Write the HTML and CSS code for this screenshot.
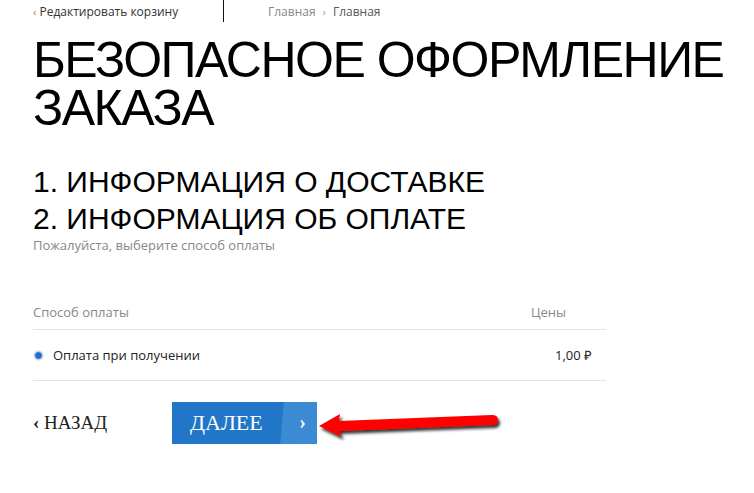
FILE: index.html
```html
<!DOCTYPE html>
<html lang="ru">
<head>
<meta charset="utf-8">
<link rel="stylesheet" href="styles.css">
</head>
<body>
<div class="page">
  <div class="topbar">
    <a class="back-link"><span class="lt">‹</span> Редактировать корзину</a>
    <span class="divider"></span>
    <div class="crumbs"><span class="c1">Главная</span><span class="sep">›</span><span class="c2">Главная</span></div>
  </div>
  <h1 class="title">БЕЗОПАСНОЕ ОФОРМЛЕНИЕ ЗАКАЗА</h1>
  <h2 class="step">1. ИНФОРМАЦИЯ О ДОСТАВКЕ</h2>
  <h2 class="step">2. ИНФОРМАЦИЯ ОБ ОПЛАТЕ</h2>
  <p class="hint">Пожалуйста, выберите способ оплаты</p>
  <div class="table">
    <div class="thead"><span>Способ оплаты</span><span class="price-h">Цены</span></div>
    <div class="trow"><span class="radio"></span><span class="name">Оплата при получении</span><span class="price">1,00 ₽</span></div>
  </div>
  <div class="actions">
    <a class="prev"><span class="chev">‹</span> НАЗАД</a>
    <div class="next-wrap">
      <a class="next"><span class="next-label">ДАЛЕЕ</span><span class="next-arrow">›</span></a>
      <svg class="red-arrow" width="190" height="40" viewBox="0 0 190 40">
        <defs>
          <filter id="sh" x="-10%" y="-30%" width="130%" height="180%">
            <feGaussianBlur in="SourceAlpha" stdDeviation="1.5"/>
            <feOffset dx="2" dy="3" result="b"/>
            <feComponentTransfer><feFuncA type="linear" slope="0.8"/></feComponentTransfer>
            <feMerge><feMergeNode/><feMergeNode in="SourceGraphic"/></feMerge>
          </filter>
        </defs>
        <g filter="url(#sh)">
          <path d="M3 22 L24 10 L23 17 L176 11 Q182 11 182 16 Q182 21 176 21 L23 27 L26 33 Z" fill="#f00"/>
        </g>
      </svg>
    </div>
  </div>
</div>
</body>
</html>
```
FILE: styles.css
```css
* { box-sizing: border-box; }
body { margin: 0; background: #fff; font-family: "Open Sans", sans-serif; }
a { text-decoration: none; }
.page { padding-left: 33px; }
.topbar { display: flex; align-items: flex-start; height: 24px; }
.back-link { font-size: 12px; color: #333; margin-top: 3px; width: 190px; }
.back-link .lt { color: #c66; font-size: 11px; }
.divider { width: 1px; height: 22px; background: #111; }
.crumbs { margin-left: 44px; margin-top: 3px; font-size: 12px; color: #888; }
.crumbs .sep { margin: 0 7px; font-size: 11px; color: #c88; }
.crumbs .c2 { color: #555; }
.title { font-family: "Liberation Sans", Arial, sans-serif; font-weight: normal; font-size: 50px; line-height: 48px; margin: 12px 0 0; color: #000; letter-spacing: -1.5px; max-width: 712px; }
.step { font-family: "Liberation Sans", Arial, sans-serif; font-weight: normal; font-size: 30px; line-height: 37px; margin: 0; color: #000; }
.title + .step { margin-top: 31px; }
.hint { margin: 0; font-size: 13px; color: #888; line-height: 16px; }
.table { width: 573px; margin-top: 50px; }
.thead { display: flex; justify-content: space-between; font-size: 13px; color: #888; padding: 0 40px 8px 0; border-bottom: 1px solid #e4e4e4; }
.trow { display: flex; align-items: center; font-size: 13px; color: #222; height: 51px; border-bottom: 1px solid #e4e4e4; }
.radio { width: 9px; height: 9px; border-radius: 50%; background: #1e6fd0; border: 1px solid #ddd; margin-left: 1px; box-shadow: 0 0 0 1px #eee; }
.name { margin-left: 10px; flex: 1; }
.price { margin-right: 14px; }
.actions { display: flex; align-items: center; margin-top: 21px; }
.prev { font-family: "Liberation Serif", serif; font-size: 19px; color: #222; width: 139px; }
.prev .chev { font-weight: bold; font-size: 19px; }
.next-wrap { position: relative; }
.next { display: flex; height: 42px; width: 145px; background: #2176c7; color: #fff; font-family: "Liberation Serif", serif; position: relative; overflow: hidden; }
.next-label { font-size: 22px; line-height: 42px; padding-left: 18px; width: 113px; }
.next-arrow { position: absolute; right: 0; top: 0; width: 31px; height: 42px; background: #3a8ad4; line-height: 40px; font-size: 20px; font-weight: bold; text-align: center; padding-left: 2px; }
.next-arrow::before { content: ""; position: absolute; left: -4px; top: 0; width: 8px; height: 42px; background: #3a8ad4; transform: skewX(-5deg); }
.red-arrow { position: absolute; left: 144px; top: 2px; }
```
